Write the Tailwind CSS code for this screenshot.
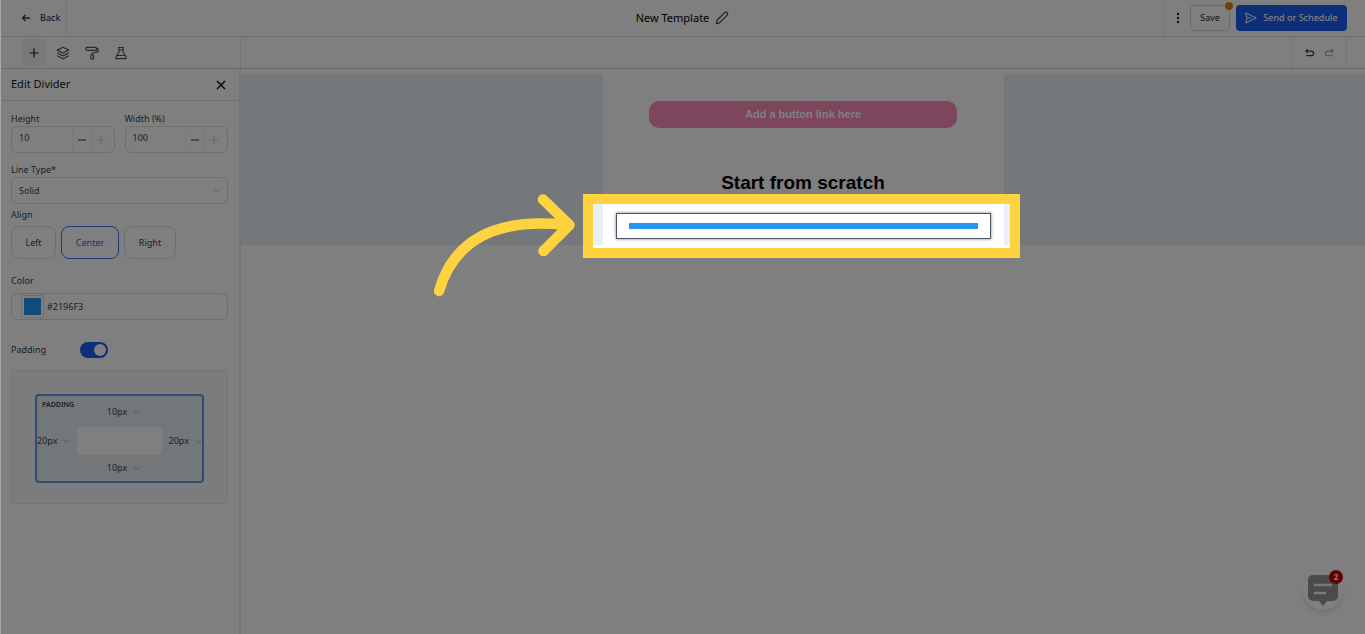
<!DOCTYPE html>
<html lang="en">
<head>
    <meta charset="UTF-8">
    <meta name="viewport" content="width=device-width, initial-scale=1.0">
    <title>New Template - Email Editor</title>
    <script src="https://cdn.jsdelivr.net/npm/@tailwindcss/browser@4"></script>
</head>
<body class="h-screen flex flex-col overflow-hidden bg-white text-gray-700 font-['Noto_Sans',sans-serif]">
    <!-- Header -->
    <header class="grid grid-cols-[1fr_auto_1fr] items-stretch h-[37px] shrink-0 border-b border-[#dcdcdc] text-[9px]">
        <div class="flex">
            <button class="flex items-center gap-2 pl-5 pr-[6px] border-r border-[#eaeaea] font-medium">
                <svg class="w-3 h-3" viewBox="0 0 12 12" fill="none" stroke="#374151" stroke-width="1.4"><path d="M10 6H2.500M5.500 3l-3 3 3 3"/></svg>
                Back
            </button>
        </div>
        <div class="flex items-center gap-[6px]">
            <h1 class="text-[11px] text-black">New Template</h1>
            <button aria-label="Rename template">
                <svg class="w-[14px] h-[14px]" viewBox="0 0 14 14" fill="none" stroke="#374151" stroke-width="1.2" stroke-linejoin="round"><path d="M2 9.2 9.7 1.6a1.6 1.6 0 0 1 2.500 2.500L4.500 11.8 1.3 12.6Z"/></svg>
            </button>
        </div>
        <div class="flex justify-end">
            <div class="flex items-center gap-[6px] pr-[18px] pl-2 border-l border-[#eaeaea]">
                <button class="w-3" aria-label="More options">
                    <svg class="w-3 h-3" viewBox="0 0 12 12" fill="#1f2937"><circle cx="6" cy="2" r="1.2"/><circle cx="6" cy="6" r="1.2"/><circle cx="6" cy="10" r="1.2"/></svg>
                </button>
                <button class="relative h-[26px] w-10 border border-gray-300 rounded font-medium">
                    Save
                    <span class="absolute -top-1 -right-1 w-2 h-2 rounded-full bg-[#ee7a0c]"></span>
                </button>
                <button class="flex items-center justify-center gap-[6px] h-[26px] w-[111px] rounded bg-[#1a5cf0] text-white font-medium">
                    <svg class="w-3 h-3" viewBox="0 0 12 12" fill="none" stroke="white" stroke-linejoin="round"><path d="M.7 1 11.3 6 .7 11 2 6ZM2 6h4"/></svg>
                    Send or Schedule
                </button>
            </div>
        </div>
    </header>

    <!-- Toolbar -->
    <div class="flex h-8 shrink-0 border-b border-[#d4d4d4]">
        <div class="flex items-center w-[241px] pl-[22px] gap-[5px] border-r border-[#eaeaea]">
            <button class="flex items-center justify-center w-6 h-[27px] bg-[#eef2f7] rounded-sm" aria-label="Add">
                <svg class="w-[10px] h-[10px]" viewBox="0 0 10 10" stroke="#1f2937" stroke-width="1.2"><path d="M5 .5v9M.5 5h9"/></svg>
            </button>
            <button class="flex items-center justify-center w-6 h-[27px]" aria-label="Layers">
                <svg class="w-[14px] h-[14px]" viewBox="0 0 14 14" fill="none" stroke="#4b5563" stroke-width="1.2" stroke-linejoin="round"><path d="m7 1.2 5.8 2.9L7 7 1.2 4.1ZM1.2 7 7 9.9 12.8 7M1.2 9.8 7 12.7l5.8-2.9"/></svg>
            </button>
            <button class="flex items-center justify-center w-6 h-[27px]" aria-label="Styles">
                <svg class="w-[14px] h-[14px]" viewBox="0 0 14 14" fill="none" stroke="#4b5563" stroke-width="1.2" stroke-linejoin="round"><rect x="1" y="1.4" width="10.500" height="3" rx="1"/><path d="M11.500 2.900h1.600v3L7.200 7v2M5.900 9h2.600v3.800H5.900Z"/></svg>
            </button>
            <button class="flex items-center justify-center w-6 h-[27px]" aria-label="Experiments">
                <svg class="w-[14px] h-[14px]" viewBox="0 0 14 14" fill="none" stroke="#4b5563" stroke-width="1.2" stroke-linejoin="round"><path d="M4 1.500h6M5 1.500V6L2 10.700v2h10v-2L9 6V1.500M5 4h4M3.200 9.500h7.600"/></svg>
            </button>
        </div>
        <div class="flex items-center gap-[9px] ml-auto mr-[18px] px-[11px] border-x border-[#eaeaea]">
            <button aria-label="Undo">
                <svg class="w-[11px] h-3" viewBox="0 0 12 12" fill="none" stroke="#374151" stroke-width="1.3"><path d="M4 1.800 2 3.900 4 6M2 3.900h6a2.400 2.400 0 0 1 0 5H2.500"/></svg>
            </button>
            <button aria-label="Redo">
                <svg class="w-[11px] h-3" viewBox="0 0 12 12" fill="none" stroke="#a3a8b0" stroke-width="1.3"><path d="M8 1.800 10 3.900 8 6M10 3.900H4a2.400 2.400 0 0 0 0 5h5.500"/></svg>
            </button>
        </div>
    </div>

    <div class="flex flex-1 min-h-0">
        <!-- Sidebar -->
        <aside class="w-[241px] shrink-0 border-r-2 border-[#eaeaea] text-[9px]">
            <div class="flex items-center justify-between h-8 pl-[11px] pr-[13px] border-b border-[#e2e2e2]">
                <h2 class="text-[11px] text-[#111827]">Edit Divider</h2>
                <button aria-label="Close">
                    <svg class="w-[10px] h-[10px]" viewBox="0 0 10 10" stroke="#111827" stroke-width="1.6"><path d="m1 1 8 8M9 1 1 9"/></svg>
                </button>
            </div>
            <form class="px-[11px] pt-[11px]">
                <div class="grid grid-cols-2 gap-[10px]">
                    <div>
                        <label for="height" class="block leading-[13px] mb-px">Height</label>
                        <div class="flex h-[27px] border border-[#dcdcdc] rounded-md">
                            <input id="height" type="text" value="10" class="flex-1 min-w-0 pl-[7px] pb-1 outline-none">
                            <button type="button" class="w-[19px] flex items-center justify-center border-l border-[#f4f4f4]" aria-label="Decrease height">
                                <svg class="w-2 h-2" viewBox="0 0 8 8" stroke="#6b7280" stroke-width="1.4"><path d="M0 4h8"/></svg>
                            </button>
                            <button type="button" class="w-[19px] flex items-center justify-center border-l border-[#f4f4f4] mr-1" aria-label="Increase height">
                                <svg class="w-2 h-2" viewBox="0 0 8 8" stroke="#cfcfcf" stroke-width="1.2"><path d="M0 4h8M4 0v8"/></svg>
                            </button>
                        </div>
                    </div>
                    <div>
                        <label for="width" class="block leading-[13px] mb-px">Width (%)</label>
                        <div class="flex h-[27px] border border-[#dcdcdc] rounded-md">
                            <input id="width" type="text" value="100" class="flex-1 min-w-0 pl-[7px] pb-1 outline-none">
                            <button type="button" class="w-[19px] flex items-center justify-center border-l border-[#f4f4f4]" aria-label="Decrease width">
                                <svg class="w-2 h-2" viewBox="0 0 8 8" stroke="#6b7280" stroke-width="1.4"><path d="M0 4h8"/></svg>
                            </button>
                            <button type="button" class="w-[19px] flex items-center justify-center border-l border-[#f4f4f4] mr-1" aria-label="Increase width">
                                <svg class="w-2 h-2" viewBox="0 0 8 8" stroke="#cfcfcf" stroke-width="1.2"><path d="M0 4h8M4 0v8"/></svg>
                            </button>
                        </div>
                    </div>
                </div>

                <label for="line-type" class="block leading-[13px] mt-[10px] mb-px">Line Type*</label>
                <div class="relative">
                    <select id="line-type" class="block w-full h-[27px] px-[7px] border border-[#dcdcdc] rounded-md appearance-none">
                        <option>Solid</option>
                        <option>Dashed</option>
                        <option>Dotted</option>
                    </select>
                    <svg class="absolute right-2 top-[10px] w-[7px] h-[7px]" viewBox="0 0 8 8" fill="none" stroke="#b0b0b0"><path d="m1 2.500 3 3 3-3"/></svg>
                </div>

                <fieldset class="mt-1">
                    <legend class="leading-[13px]">Align</legend>
                    <div class="flex gap-[5px] mt-[5px]">
                        <button type="button" class="w-[45px] h-[33px] border border-[#dedede] rounded-lg">Left</button>
                        <button type="button" class="w-[58px] h-[33px] border border-[#3b6ef0] rounded-lg text-[#2f5fe0]">Center</button>
                        <button type="button" class="w-[52px] h-[33px] border border-[#dedede] rounded-lg">Right</button>
                    </div>
                </fieldset>

                <label for="color" class="block leading-[13px] mt-[15px]">Color</label>
                <div class="flex items-center h-[27px] mt-[6px] pl-[9px] border border-[#dcdcdc] rounded-md">
                    <span class="w-[23px] h-[23px] p-[2px] border border-[#dcdcdc] rounded-xs"><span class="block h-full bg-[#2196f3]"></span></span>
                    <input id="color" type="text" value="#2196F3" class="flex-1 min-w-0 pl-[3px] outline-none">
                </div>

                <div class="flex items-center h-4 mt-[22px]">
                    <label for="padding-on" class="w-[69px]">Padding</label>
                    <input id="padding-on" type="checkbox" checked class="peer sr-only">
                    <label for="padding-on" aria-label="Toggle padding" class="flex justify-end w-7 h-4 p-[2px] rounded-full bg-[#1a5cf0]"><span class="w-3 h-3 rounded-full bg-white"></span></label>
                </div>

                <!-- Padding box -->
                <div class="mt-3 h-[134px] px-[23px] pt-[23px] pb-5 bg-[#f5f9fc] border border-[#e4e8eb] rounded-sm">
                    <div class="relative grid grid-cols-[40px_1fr_40px] grid-rows-[31px_28px_1fr] items-center justify-items-center h-full border-2 border-[#5c9ae2] rounded-sm bg-[#e6eff5]">
                        <span class="absolute left-[5px] top-1 text-[7px] leading-[10px] font-semibold">PADDING</span>
                        <button type="button" class="col-start-2 flex items-center gap-[6px] pl-2">10px <svg class="w-[7px] h-[7px]" viewBox="0 0 8 8" fill="none" stroke="#9ca3af"><path d="m1 2.500 3 3 3-3"/></svg></button>
                        <button type="button" class="row-start-2 flex items-center gap-[6px] justify-self-start">20px <svg class="w-[7px] h-[7px]" viewBox="0 0 8 8" fill="none" stroke="#9ca3af"><path d="m1 2.500 3 3 3-3"/></svg></button>
                        <div class="row-start-2 col-start-2 w-full h-full bg-white rounded-sm"></div>
                        <button type="button" class="row-start-2 col-start-3 flex items-center gap-[6px] justify-self-end">20px <svg class="w-[7px] h-[7px]" viewBox="0 0 8 8" fill="none" stroke="#9ca3af"><path d="m1 2.500 3 3 3-3"/></svg></button>
                        <button type="button" class="col-start-2 row-start-3 flex items-center gap-[6px] pl-2">10px <svg class="w-[7px] h-[7px]" viewBox="0 0 8 8" fill="none" stroke="#9ca3af"><path d="m1 2.500 3 3 3-3"/></svg></button>
                    </div>
                </div>
            </form>
        </aside>

        <!-- Canvas -->
        <main class="flex-1 min-w-0 pt-[5px]">
            <div class="bg-[#e9f0f7]">
                <div class="w-[401px] mx-auto h-[171px] pt-[27px] bg-white font-['Liberation_Sans',Arial,sans-serif]">
                    <a href="#" class="block w-[308px] h-[27px] mx-auto rounded-[10px] bg-[#fa8cb8] text-center text-[11px] leading-[27px] font-bold text-white">Add a button link here</a>
                    <h2 class="mt-[43px] text-center text-[19px] leading-6 font-bold text-black">Start from scratch</h2>
                    <div class="relative w-[375px] h-[26px] mx-auto mt-[18px] px-3 py-[9px] border border-[#4b5563] shadow-[0_0_3px_rgba(0,0,0,0.5)]">
                        <div class="h-[6px] bg-[#2196f3]"></div>
                        <!-- Tour spotlight around the divider, dims everything else -->
                        <div class="absolute z-20 -left-[34px] -right-[30px] -top-5 -bottom-5 border-[10px] border-[#ffd23f] shadow-[0_0_0_3000px_rgba(0,0,0,0.5)] pointer-events-none"></div>
                        <svg class="absolute z-30 -left-[183px] -top-5 w-[144px] h-[106px] pointer-events-none" viewBox="0 0 144 106" fill="none" stroke="#ffd23f" stroke-width="10.500" stroke-linecap="round" stroke-linejoin="round"><path d="M5 97C19 49 58 23 132 31M109 5.500l26.500 25.500-26 26"/></svg>
                    </div>
                </div>
            </div>
        </main>
    </div>

    <!-- Window edge, stays above the dimmed page -->
    <div class="fixed z-30 inset-y-0 left-0 w-px bg-[#a8a8a8]"></div>

    <!-- Chat launcher -->
    <button class="fixed z-10 right-[22px] bottom-6 w-10 h-10 rounded-full bg-white shadow-md flex items-center justify-center" aria-label="Open chat">
        <svg class="w-8 h-8" viewBox="0 0 32 32"><path fill="#969696" d="M6 1h20a5 5 0 0 1 5 5v16a5 5 0 0 1-5 5h-6l-4 5-4-5H6a5 5 0 0 1-5-5V6a5 5 0 0 1 5-5Z"/><path stroke="#f2f2f2" stroke-width="2.500" stroke-linecap="round" d="M8 11h16M8 19h10"/></svg>
        <span class="absolute top-0 right-0 w-[14px] h-[14px] rounded-full bg-[#c80000] text-white text-[8px] leading-[14px] font-bold">2</span>
    </button>
</body>
</html>
